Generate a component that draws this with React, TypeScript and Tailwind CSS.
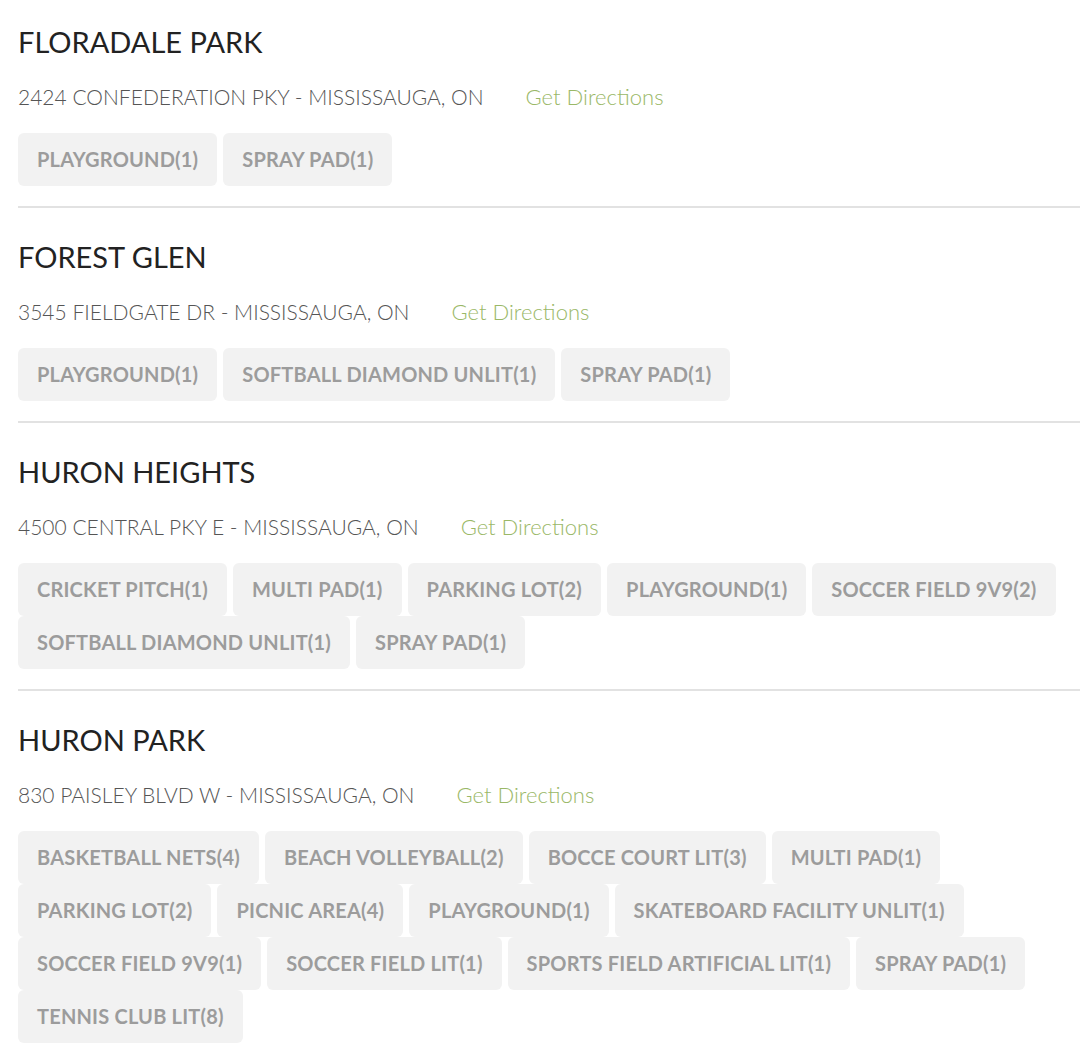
const parks = [
  {
    name: 'FLORADALE PARK',
    address: '2424 CONFEDERATION PKY - MISSISSAUGA, ON',
    amenities: ['PLAYGROUND(1)', 'SPRAY PAD(1)'],
  },
  {
    name: 'FOREST GLEN',
    address: '3545 FIELDGATE DR - MISSISSAUGA, ON',
    amenities: ['PLAYGROUND(1)', 'SOFTBALL DIAMOND UNLIT(1)', 'SPRAY PAD(1)'],
  },
  {
    name: 'HURON HEIGHTS',
    address: '4500 CENTRAL PKY E - MISSISSAUGA, ON',
    amenities: [
      'CRICKET PITCH(1)',
      'MULTI PAD(1)',
      'PARKING LOT(2)',
      'PLAYGROUND(1)',
      'SOCCER FIELD 9V9(2)',
      'SOFTBALL DIAMOND UNLIT(1)',
      'SPRAY PAD(1)',
    ],
  },
  {
    name: 'HURON PARK',
    address: '830 PAISLEY BLVD W - MISSISSAUGA, ON',
    amenities: [
      'BASKETBALL NETS(4)',
      'BEACH VOLLEYBALL(2)',
      'BOCCE COURT LIT(3)',
      'MULTI PAD(1)',
      'PARKING LOT(2)',
      'PICNIC AREA(4)',
      'PLAYGROUND(1)',
      'SKATEBOARD FACILITY UNLIT(1)',
      'SOCCER FIELD 9V9(1)',
      'SOCCER FIELD LIT(1)',
      'SPORTS FIELD ARTIFICIAL LIT(1)',
      'SPRAY PAD(1)',
      'TENNIS CLUB LIT(8)',
    ],
  },
];

export default function App() {
  return (
    <div className="min-h-screen bg-white pl-[18px] pt-[22px] font-['Lato',sans-serif]">
      {parks.map((park, i) => (
        <section
          key={park.name}
          className={i < parks.length - 1 ? 'mb-[29px] border-b-2 border-[#e2e2e2] pb-[20px]' : 'pb-[20px]'}
        >
          <h2 className="text-[29px] leading-[40px] font-normal text-[#222]">{park.name}</h2>
          <div className="mt-[20px] flex items-center leading-[30px] font-light">
            <span className="text-[21px] text-[#555]">{park.address}</span>
            <a href="#" className="ml-[42px] text-[22px] text-[#9ab867]">
              Get Directions
            </a>
          </div>
          <ul className="mt-[21px] flex flex-wrap gap-x-[6px]">
            {park.amenities.map((a) => (
              <li
                key={a}
                className="h-[53px] rounded-[6px] bg-[#f2f2f2] px-[19px] text-[20px] leading-[53px] font-bold tracking-[0.2px] text-[#9c9c9c]"
              >
                {a}
              </li>
            ))}
          </ul>
        </section>
      ))}
    </div>
  );
}
